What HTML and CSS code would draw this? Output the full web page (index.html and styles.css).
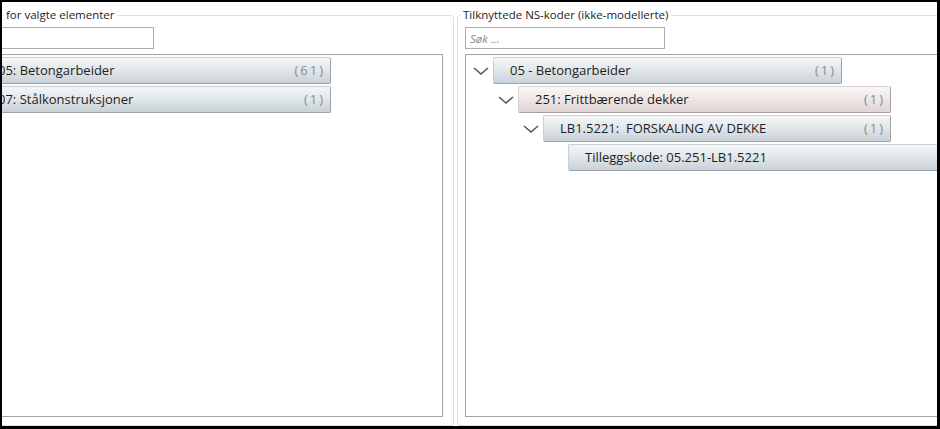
FILE: index.html
```html
<!DOCTYPE html>
<html lang="no">
<head>
    <meta charset="UTF-8">
    <title>NS-koder</title>
    <link rel="stylesheet" href="styles.css">
</head>
<body>

    <div class="window">
        <!-- Left: codes for selected elements -->
        <fieldset class="group group-left">
            <legend>for valgte elementer</legend>
            <input class="search" type="text">
            <div class="list">
                <div class="item"><span class="name">05: Betongarbeider</span><span class="count">(61)</span></div>
                <div class="item"><span class="name">07: Stålkonstruksjoner</span><span class="count">(1)</span></div>
            </div>
        </fieldset>

        <!-- Right: linked NS codes (not modelled) -->
        <fieldset class="group group-right">
            <legend>Tilknyttede NS-koder (ikke-modellerte)</legend>
            <input class="search" type="text" placeholder="Søk ...">
            <div class="list tree">
                <div class="node">
                    <span class="toggle"><svg width="16" height="8" viewBox="0 0 16 8"><path d="M1 1 L8 7 L15 1" /></svg></span>
                    <div class="item bar-0"><span class="name">05 - Betongarbeider</span><span class="count">(1)</span></div>
                </div>
                <div class="node level-1">
                    <span class="toggle"><svg width="16" height="8" viewBox="0 0 16 8"><path d="M1 1 L8 7 L15 1" /></svg></span>
                    <div class="item item-rose bar-1"><span class="name">251: Frittbærende dekker</span><span class="count">(1)</span></div>
                </div>
                <div class="node level-2">
                    <span class="toggle"><svg width="16" height="8" viewBox="0 0 16 8"><path d="M1 1 L8 7 L15 1" /></svg></span>
                    <div class="item bar-2"><span class="name">LB1.5221:&nbsp; FORSKALING AV DEKKE</span><span class="count">(1)</span></div>
                </div>
                <div class="node level-3">
                    <span class="toggle"></span>
                    <div class="item bar-3"><span class="name">Tilleggskode: 05.251-LB1.5221</span></div>
                </div>
            </div>
        </fieldset>
    </div>

</body>
</html>
```

FILE: styles.css
```css
/* Base */
body {
    margin: 0;
    background-color: #000000;
    font-family: "Open Sans", "Noto Sans", sans-serif;
    color: #1e1e1e;
}
.window {
    display: flex;
    gap: 3px;
    margin: 2px 3px 3px 2px;
    height: 424px;
    background-color: #ffffff;
    overflow: hidden;
}

/* Group boxes */
.group {
    box-sizing: border-box;
    margin: 5px 0 0 0;
    height: 419px;
    padding: 4px 10px 8px 7px;
    border: 1px solid #d5dfe5;
    border-radius: 3px;
    display: flex;
    flex-direction: column;
    min-width: 0;
}
.group legend {
    padding: 0 3px;
    margin-left: -5px;
    font-size: 11.5px;
    line-height: 16px;
    color: #1e1e1e;
}
.group-left {
    flex: none;
    width: 484px;
    margin-left: -32px;
}
.group-left legend {
    margin-left: 25px;
}
.group-right {
    flex: none;
    width: 520px;
}

/* Search */
.search {
    box-sizing: border-box;
    height: 22px;
    margin: 0;
    padding: 0 4px;
    border: 1px solid #abadb3;
    font-family: inherit;
    font-size: 11.5px;
    outline: none;
}
.search::placeholder {
    color: #8a8a8a;
    font-style: italic;
}
.group-left .search {
    width: 176px;
}
.group-right .search {
    width: 200px;
}

/* Lists */
.list {
    box-sizing: border-box;
    margin-top: 5px;
    height: 363px;
    padding: 2px 0 0 2px;
    border: 1px solid #a3a3a3;
}
.group-left .list {
    width: 465px;
}
.group-right .list {
    width: 600px;
}
.item {
    box-sizing: border-box;
    display: flex;
    align-items: center;
    justify-content: space-between;
    height: 27px;
    margin-bottom: 2px;
    padding: 0 5px 1px 16px;
    font-size: 13px;
    background: linear-gradient(#f4f6f7, #e3e8eb 45%, #c8d2d9);
    border: 1px solid #c9d1d6;
    border-right-color: #98a3ab;
    border-bottom-color: #98a3ab;
    border-radius: 2px;
    white-space: nowrap;
}
.group-left .item {
    width: 350px;
    margin-left: 0;
}
.item-rose {
    background: linear-gradient(#faf7f7, #efe8e8 45%, #dfd4d4);
    border-color: #d8d0d0;
    border-right-color: #a99f9f;
    border-bottom-color: #a99f9f;
}
.count {
    color: #8c8c8c;
    letter-spacing: 2px;
}

/* Tree */
.node {
    display: flex;
    align-items: center;
    margin-bottom: 2px;
}
.node .item {
    margin-bottom: 0;
}
.toggle {
    flex: none;
    width: 25px;
    display: flex;
    justify-content: center;
}
.toggle path {
    fill: none;
    stroke: #555555;
    stroke-width: 1.5;
}
.level-1 {
    padding-left: 25px;
}
.level-2 {
    padding-left: 50px;
}
.level-3 {
    padding-left: 75px;
}
.bar-0 {
    width: 349px;
}
.bar-1 {
    width: 373px;
}
.bar-2 {
    width: 348px;
}
.bar-3 {
    width: 420px;
}
```
